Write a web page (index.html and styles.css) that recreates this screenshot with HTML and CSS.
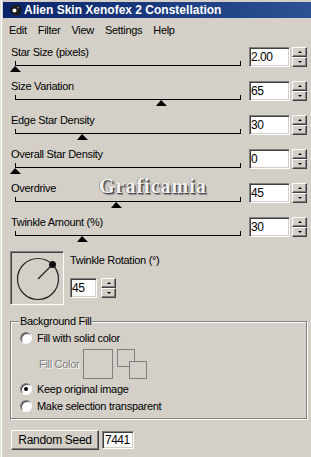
FILE: index.html
```html
<!DOCTYPE html>
<html>
<head>
    <meta charset="utf-8">
    <title>Alien Skin Xenofex 2 Constellation</title>
    <link rel="stylesheet" href="styles.css">
</head>
<body>
<div class="window">

    <div class="titlebar">
        <svg class="appicon" viewBox="0 0 12 12">
            <circle cx="6" cy="6" r="5.5" fill="#1a1a1a"/>
            <circle cx="4.5" cy="6.5" r="2" fill="#fff"/>
            <circle cx="8" cy="3.5" r="1" fill="#777"/>
        </svg>
        <span>Alien Skin Xenofex 2 Constellation</span>
    </div>

    <div class="menubar">
        <span>Edit</span>
        <span>Filter</span>
        <span>View</span>
        <span>Settings</span>
        <span>Help</span>
    </div>

    <div class="params">
        <div class="row">
            <div class="slider">
                <div class="label">Star Size (pixels)</div>
                <div class="track"><div class="thumb" style="left: 0%"></div></div>
            </div>
            <div class="field">
                <div class="edit">2.00</div>
                <div class="spin"><div class="up"></div><div class="down"></div></div>
            </div>
        </div>
        <div class="row">
            <div class="slider">
                <div class="label">Size Variation</div>
                <div class="track"><div class="thumb" style="left: 65%"></div></div>
            </div>
            <div class="field">
                <div class="edit">65</div>
                <div class="spin"><div class="up"></div><div class="down"></div></div>
            </div>
        </div>
        <div class="row">
            <div class="slider">
                <div class="label">Edge Star Density</div>
                <div class="track"><div class="thumb" style="left: 30%"></div></div>
            </div>
            <div class="field">
                <div class="edit">30</div>
                <div class="spin"><div class="up"></div><div class="down"></div></div>
            </div>
        </div>
        <div class="row">
            <div class="slider">
                <div class="label">Overall Star Density</div>
                <div class="track"><div class="thumb" style="left: 0%"></div></div>
            </div>
            <div class="field">
                <div class="edit">0</div>
                <div class="spin"><div class="up"></div><div class="down"></div></div>
            </div>
        </div>
        <div class="row">
            <div class="slider">
                <div class="label">Overdrive</div>
                <div class="track"><div class="thumb" style="left: 45%"></div></div>
            </div>
            <div class="field">
                <div class="edit">45</div>
                <div class="spin"><div class="up"></div><div class="down"></div></div>
            </div>
        </div>
        <div class="row">
            <div class="slider">
                <div class="label">Twinkle Amount (%)</div>
                <div class="track"><div class="thumb" style="left: 30%"></div></div>
            </div>
            <div class="field">
                <div class="edit">30</div>
                <div class="spin"><div class="up"></div><div class="down"></div></div>
            </div>
        </div>
    </div>

    <div class="rotation">
        <div class="knob">
            <svg viewBox="0 0 50 50" width="50" height="50">
                <circle cx="26" cy="26" r="20.5" fill="none" stroke="#222" stroke-width="1.2"/>
                <line x1="26" y1="26" x2="40.5" y2="11.5" stroke="#222" stroke-width="1.2"/>
                <circle cx="40.5" cy="11.5" r="3.5" fill="#111"/>
            </svg>
        </div>
        <div class="rotcol">
            <div class="label">Twinkle Rotation (°)</div>
            <div class="field small">
                <div class="edit">45</div>
                <div class="spin"><div class="up"></div><div class="down"></div></div>
            </div>
        </div>
    </div>

    <div class="group">
        <span class="legend">Background Fill</span>
        <div class="option"><span class="radio"></span>Fill with solid color</div>
        <div class="fillrow">
            <span class="disabled">Fill Color</span>
            <div class="colorbox"></div>
            <div class="swatches"><div class="sw"></div><div class="sw second"></div></div>
        </div>
        <div class="option opt2"><span class="radio checked"></span>Keep original image</div>
        <div class="option opt3"><span class="radio"></span>Make selection transparent</div>
    </div>

    <div class="seedrow">
        <div class="button">Random Seed</div>
        <div class="edit seed">7441</div>
    </div>

    <div class="watermark">Graficamia</div>
</div>
</body>
</html>
```

FILE: styles.css
```css
* {box-sizing: border-box;}

body {
    margin: 0;
    width: 311px;
    height: 457px;
    overflow: hidden;
    background: #d4d0c8;
    font-family: "Liberation Sans", Arial, sans-serif;
    font-size: 11px;
    letter-spacing: -0.3px;
    color: #000;
}

.window {
    position: relative;
    height: 457px;
    padding-top: 2px;
    box-shadow: inset 1px 0 #e4e2dc, inset 2px 0 #fff;
}

.titlebar {
    height: 16px;
    margin-left: 3px;
    padding-left: 7px;
    display: flex;
    align-items: center;
    background: linear-gradient(to right, #0a246a, #2c5294);
    color: #fff;
    font-weight: bold;
    font-size: 12px;
    letter-spacing: 0;
}
.appicon {width: 12px; height: 12px; margin-right: 2px;}

.menubar {
    height: 22px;
    padding: 2px 0 0 9px;
    display: flex;
    align-items: center;
    gap: 11px;
}

.params {padding-top: 5px;}

.row {
    height: 34px;
    display: flex;
    padding-left: 11px;
}

.slider {width: 238px;}
.label {height: 14px; line-height: 14px;}

.track {
    position: relative;
    width: 226px;
    height: 5px;
    margin: 2px 0 0 4px;
    border: 1px solid #000;
    border-top: none;
}

.thumb {
    position: absolute;
    top: calc(100% + 1px);
    margin-left: -6px;
    width: 0;
    height: 0;
    border-left: 5px solid transparent;
    border-right: 6px solid transparent;
    border-bottom: 6px solid #000;
}

.field {
    display: flex;
    gap: 2px;
    margin-top: 2px;
}

.edit {
    width: 41px;
    height: 20px;
    padding: 0 0 0 1px;
    line-height: 18px;
    font-size: 12px;
    letter-spacing: -0.5px;
    background: #fff;
    border: 1px solid;
    border-color: #808080 #fff #fff #808080;
    box-shadow: inset 1px 1px #404040, inset -1px -1px #d4d0c8;
}

.spin {
    width: 15px;
    height: 20px;
    display: flex;
    flex-direction: column;
}
.spin div {
    height: 10px;
    display: flex;
    align-items: center;
    justify-content: center;
    border: 1px solid;
    border-color: #fff #404040 #404040 #fff;
    box-shadow: inset -1px -1px #808080;
}
.spin .up::after {
    content: "";
    border-left: 2px solid transparent;
    border-right: 2px solid transparent;
    border-bottom: 2px solid #000;
}
.spin .down::after {
    content: "";
    border-left: 2px solid transparent;
    border-right: 2px solid transparent;
    border-top: 2px solid #000;
}

.rotation {
    display: flex;
    padding-left: 10px;
    margin-top: 2px;
}

.knob {
    width: 54px;
    height: 54px;
    border: 1px solid;
    border-color: #808080 #fff #fff #808080;
    box-shadow: inset 1px 1px #404040;
}
.knob svg {display: block; margin: 1px 0 0 1px;}

.rotcol {margin-left: 6px;}
.rotcol .label {margin-top: 2px;}
.field.small {margin-top: 11px; gap: 4px;}
.field.small .edit {width: 27px;}

.group {
    position: relative;
    width: 297px;
    height: 98px;
    margin: 16px 0 0 10px;
    padding: 10px 0 0 9px;
    border: 1px solid #808080;
    box-shadow: inset 1px 1px #fff, 1px 1px #fff;
}

.legend {
    position: absolute;
    top: -7px;
    left: 8px;
    padding: 0 1px;
    line-height: 13px;
    background: #d4d0c8;
}

.option {
    height: 12px;
    display: flex;
    align-items: center;
}
.opt2 {margin-top: 4px;}
.opt3 {margin-top: 5px;}

.radio {
    width: 12px;
    height: 12px;
    margin-right: 5px;
    border-radius: 50%;
    background: #fff;
    border: 1px solid;
    border-color: #808080 #fff #fff #808080;
    box-shadow: inset 1px 1px #404040;
    display: flex;
    align-items: center;
    justify-content: center;
}
.radio.checked::after {
    content: "";
    width: 4px;
    height: 4px;
    border-radius: 50%;
    background: #000;
}

.fillrow {
    height: 30px;
    margin-top: 5px;
    padding-left: 19px;
    display: flex;
    align-items: center;
}
.disabled {
    width: 44px;
    color: #808080;
    text-shadow: 1px 1px #fff;
}
.colorbox {
    width: 30px;
    height: 30px;
    border: 1px solid #808080;
}
.swatches {
    width: 30px;
    height: 30px;
    margin-left: 4px;
    display: flex;
}
.sw {
    width: 18px;
    height: 18px;
    flex: none;
    border: 1px solid #808080;
    background: #d4d0c8;
}
.sw.second {
    margin: 12px 0 0 -6px;
}

.seedrow {
    display: flex;
    margin: 11px 0 0 11px;
}

.button {
    width: 88px;
    height: 20px;
    line-height: 18px;
    text-align: center;
    font-size: 12px;
    border: 1px solid;
    border-color: #fff #404040 #404040 #fff;
    box-shadow: inset -1px -1px #808080;
}

.edit.seed {
    width: 32px;
    height: 18px;
    line-height: 16px;
    margin: 1px 0 0 3px;
    padding-left: 2px;
}

.watermark {
    position: absolute;
    left: 99px;
    top: 175px;
    font-family: "Liberation Serif", serif;
    font-weight: bold;
    font-size: 20px;
    letter-spacing: 1px;
    color: #f2f2f2;
    text-shadow: 1px 1px 0 #444, -1px 0 0 #999, 2px 2px 1px #888;
}
```
